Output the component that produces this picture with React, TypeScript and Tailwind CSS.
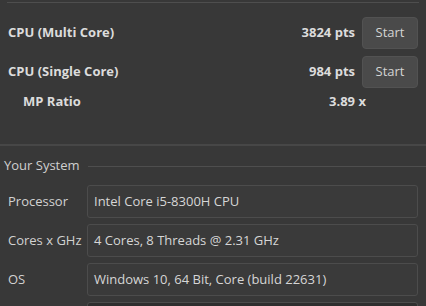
import React from "react";

const font = { fontFamily: '"Segoe UI", "Open Sans", "Noto Sans", sans-serif' };

const Bench = ({ label, score, indent }: { label: string; score: string; indent?: boolean }) => (
  <div className="flex items-center h-[39px]">
    <span className={`flex-1 text-[13px] font-bold text-[#dcdcdc] ${indent ? "pl-[23px]" : "pl-2"}`}>{label}</span>
    <span className="text-[13px] font-bold text-[#dcdcdc] pr-[7px]">{score}</span>
    <button className="w-[56px] h-[32px] rounded-[4px] bg-[#4a4a4a] border border-[#525252] text-[13px] text-[#d4d4d4]">
      Start
    </button>
  </div>
);

const InfoRow = ({ label, value }: { label: string; value: string }) => (
  <div className="flex items-center h-[39px]">
    <span className="w-[87px] pl-2 text-[13px] text-[#d2d2d2]">{label}</span>
    <div className="flex-1 h-[33px] flex items-center pl-[6px] border border-[#4c4c4c] rounded-[3px] bg-[#3a3a3a] text-[13px] text-[#d6d6d6]">
      {value}
    </div>
  </div>
);

export default function App() {
  return (
    <div className="w-[426px] h-[306px] overflow-hidden bg-[#383838]" style={font}>
      <div className="ml-[7px] mr-[7px] mt-[2px] h-px bg-[#4e4e4e]" />
      <div className="pr-2 pt-[10px]">
        <Bench label="CPU (Multi Core)" score="3824 pts" />
        <Bench label="CPU (Single Core)" score="984 pts" />
        <div className="flex items-center h-[22px]">
          <span className="flex-1 pl-[23px] text-[13px] font-bold text-[#dcdcdc]">MP Ratio</span>
          <span className="text-[13px] font-bold text-[#dcdcdc] w-[89px]">3.89 x</span>
        </div>
      </div>
      <div className="mt-[31px] h-[2px] bg-[#474747]" />
      <div className="flex items-center gap-2 mt-[10px] h-[20px]">
        <span className="pl-1 text-[13px] text-[#cfcfcf]">Your System</span>
        <div className="flex-1 h-px bg-[#4e4e4e]" />
      </div>
      <div className="pr-2 pt-[6px]">
        <InfoRow label="Processor" value="Intel Core i5-8300H CPU" />
        <InfoRow label="Cores x GHz" value="4 Cores, 8 Threads @ 2.31 GHz" />
        <InfoRow label="OS" value="Windows 10, 64 Bit, Core (build 22631)" />
        <div className="ml-[87px] mt-[3px] h-[33px] border border-[#4c4c4c] rounded-[3px] bg-[#2e2e2e]" />
      </div>
    </div>
  );
}
